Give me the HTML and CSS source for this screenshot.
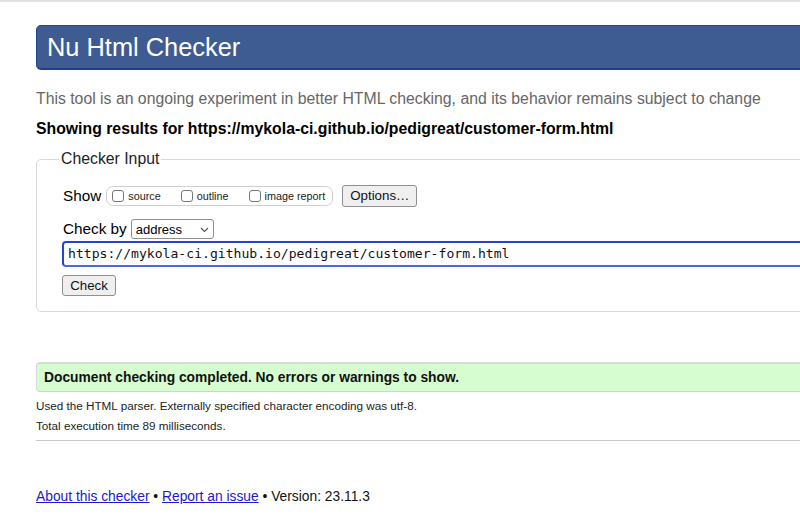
FILE: index.html
```html
<!DOCTYPE html>
<html>
<head>
<meta charset="utf-8">
<title>Nu Html Checker</title>
<link rel="stylesheet" href="styles.css">
</head>
<body>
<div class="topline"></div>
<main class="page">
  <h1 class="title">Nu Html Checker</h1>
  <p class="desc">This tool is an ongoing experiment in better HTML checking, and its behavior remains subject to change</p>
  <p class="showing">Showing results for https://mykola-ci.github.io/pedigreat/customer-form.html</p>
  <fieldset class="input-box">
    <legend class="legend">Checker Input</legend>
    <div class="row show-row">
      <span class="label">Show</span>
      <span class="group">
        <label class="opt"><span class="cb"></span>source</label>
        <label class="opt"><span class="cb"></span>outline</label>
        <label class="opt"><span class="cb"></span>image report</label>
      </span>
      <button class="btn options">Options…</button>
    </div>
    <div class="row by-row">
      <span class="label">Check by</span>
      <span class="select">address<svg class="chev" width="9" height="6" viewBox="0 0 9 6"><path d="M1 1 L4.5 4.5 L8 1" fill="none" stroke="#555" stroke-width="1.1"/></svg></span>
    </div>
    <div class="url">https://mykola-ci.github.io/pedigreat/customer-form.html</div>
    <button class="btn check">Check</button>
  </fieldset>
  <div class="success">Document checking completed. No errors or warnings to show.</div>
  <p class="note first">Used the HTML parser. Externally specified character encoding was utf-8.</p>
  <p class="note">Total execution time 89 milliseconds.</p>
  <hr class="rule">
  <p class="footer"><a href="#">About this checker</a> • <a href="#">Report an issue</a> • Version: 23.11.3</p>
</main>
</body>
</html>
```
FILE: styles.css
```css
html, body {
  margin: 0;
  padding: 0;
  overflow: hidden;
  background: #fff;
}
body {
  width: 800px;
  height: 528px;
  font-family: "Liberation Sans", Arial, sans-serif;
  color: #000;
}
.topline {
  height: 2px;
  background: #e2e2e2;
}
.page {
  padding: 23px 0 0 36px;
  width: 820px;
}
.title {
  margin: 0;
  height: 45px;
  box-sizing: border-box;
  background: #3e5c92;
  border: 1px solid #23468c;
  border-bottom: 2px solid #1d3f8c;
  border-radius: 5px 0 0 5px;
  color: #fff;
  font-size: 25.4px;
  font-weight: normal;
  line-height: 42px;
  padding-left: 10px;
}
.desc {
  margin: 19px 0 0;
  font-size: 15.8px;
  color: #666;
  line-height: 20px;
}
.showing {
  margin: 10px 0 0;
  font-size: 15.8px;
  font-weight: bold;
  line-height: 20px;
}
.input-box {
  margin: 11px 0 0;
  border: 1px solid #d8d8d8;
  border-radius: 5px 0 0 5px;
  padding: 10px 0 15px 26px;
}
.legend {
  font-size: 15.8px;
  padding: 0 2px;
  margin-left: -4px;
  color: #222;
}
.row {
  display: flex;
  align-items: center;
}
.label {
  font-size: 15.3px;
}
.show-row {
  margin-top: 7px;
  height: 22px;
}
.group {
  display: flex;
  align-items: center;
  margin-left: 5px;
  height: 20px;
  border: 1px solid #cfcfcf;
  border-radius: 7px;
  padding: 0 0 0 5px;
  width: 227px;
  box-sizing: border-box;
}
.opt {
  display: flex;
  align-items: center;
  font-size: 10.8px;
  color: #222;
  margin-right: 20px;
}
.opt:last-child { margin-right: 0; }
.cb {
  width: 12px;
  height: 12px;
  border: 1px solid #777;
  border-radius: 3px;
  margin-right: 4px;
  box-sizing: border-box;
  background: #fff;
}
.btn {
  font-family: "Liberation Sans", Arial, sans-serif;
  font-size: 13.3px;
  color: #111;
  background: #efefef;
  border: 1px solid #8f8f8f;
  border-radius: 3px;
  padding: 0 6px;
  height: 22px;
  line-height: 20px;
}
.options {
  margin-left: 9px;
  width: 75px;
}
.by-row {
  margin-top: 12px;
  height: 20px;
}
.select {
  margin-left: 4px;
  width: 83px;
  height: 20px;
  box-sizing: border-box;
  border: 1px solid #8f8f8f;
  border-radius: 3px;
  font-size: 13px;
  display: flex;
  align-items: center;
  justify-content: space-between;
  padding: 0 4px 0 4px;
  background: #fff;
}
.chev { margin-top: 1px; }
.url {
  margin-top: 2px;
  margin-left: -1px;
  height: 26px;
  box-sizing: border-box;
  border: 2px solid #2346c8;
  border-bottom-color: #4a6ccc;
  border-radius: 4px 0 0 4px;
  font-family: "DejaVu Sans Mono", "Liberation Mono", monospace;
  font-size: 13.1px;
  line-height: 22px;
  padding-left: 4px;
  color: #111;
}
.check {
  margin-top: 8px;
  margin-left: -1px;
  width: 54px;
  height: 21px;
  font-size: 13.3px;
}
.success {
  margin-top: 50px;
  height: 30px;
  box-sizing: border-box;
  background: #d6fdd0;
  border-top: 2px solid #dadada;
  border-bottom: 1px solid #d2d2d2;
  border-left: 1px solid #dadada;
  border-radius: 4px 0 0 4px;
  font-size: 13.8px;
  font-weight: bold;
  line-height: 27px;
  padding-left: 7px;
  color: #111;
}
.note {
  margin: 0;
  font-size: 11.7px;
  line-height: 20px;
  color: #222;
}
.note.first { margin-top: 4px; }
.rule {
  margin: 4px 0 0;
  border: 0;
  border-top: 1px solid #c9c9c9;
  height: 0;
}
.footer {
  margin: 47px 0 0;
  font-size: 13.8px;
  line-height: 18px;
  color: #111;
}
.footer a {
  color: #1a1acc;
  text-decoration: underline;
}
```
